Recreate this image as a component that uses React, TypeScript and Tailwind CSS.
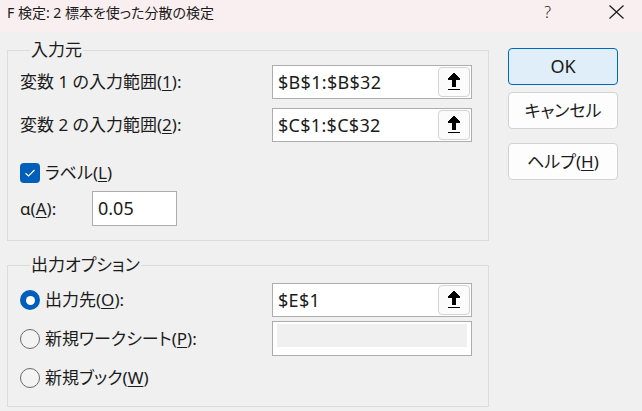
import React from "react";

const FONT = "font-['Noto_Sans','Noto_Sans_CJK_JP',sans-serif]";

function UpBtn() {
  return (
    <div className="absolute right-[1px] top-[1px] bottom-[1px] w-[32px] rounded-[4px] border border-[#d4d4d4] bg-[#fbfbfb] flex items-center justify-center">
      <svg width="12" height="18" viewBox="0 0 12 18" shapeRendering="crispEdges">
        <polygon points="5,0 7,0 7,1 8,1 8,2 9,2 9,3 10,3 10,4 11,4 11,5 12,5 12,7 8,7 8,14 4,14 4,7 0,7 0,5 1,5 1,4 2,4 2,3 3,3 3,2 4,2 4,1 5,1" fill="#000" />
        <rect x="0" y="16" width="12" height="1.3" fill="#000" />
      </svg>
    </div>
  );
}

function RefInput({ value, withBtn = true }: { value: string; withBtn?: boolean }) {
  return (
    <div className="relative w-[200px] h-[34px] border border-[#adadad] bg-white flex items-center pl-[5px]">
      <span className="text-[18px] text-[#1b1b1b] tracking-[0.3px]">{value}</span>
      {withBtn && <UpBtn />}
    </div>
  );
}

function Radio({ checked }: { checked?: boolean }) {
  if (checked)
    return (
      <div className="w-[20px] h-[20px] rounded-full bg-[#005fb8] flex items-center justify-center">
        <div className="w-[9px] h-[9px] rounded-full bg-white" />
      </div>
    );
  return <div className="w-[20px] h-[20px] rounded-full border border-[#6b6b6b] bg-[#f3f3f3]" />;
}

function Btn({ children, primary }: { children: React.ReactNode; primary?: boolean }) {
  return (
    <div
      className={
        "w-[110px] h-[37px] rounded-[4px] flex items-center justify-center text-[#1b1b1b] " +
        (primary ? "border border-[#0067c0] bg-[#e0eef9] text-[18px]" : "border border-[#d2d2d2] bg-[#fdfdfd] text-[17px]")
      }
    >
      {children}
    </div>
  );
}

export default function App() {
  return (
    <div className={"w-[642px] h-[411px] bg-[#f0f0f0] flex flex-col overflow-hidden [font-feature-settings:'palt'] " + FONT}>
      {/* title bar */}
      <div className="h-[32px] shrink-0 bg-[#f9eff0] flex items-center pl-[7px] pb-[8px]">
        <span className="text-[14px] text-[#1b1b1b]">F 検定: 2 標本を使った分散の検定</span>
        <span className="ml-auto mr-[58px] text-[16px] text-[#1b1b1b] font-light">?</span>
        <svg width="15" height="14" viewBox="0 0 15 14" className="mr-[18px]">
          <path d="M0.5 0.5 L14.5 13.5 M14.5 0.5 L0.5 13.5" stroke="#1b1b1b" strokeWidth="1.2" />
        </svg>
      </div>

      <div className="flex pl-[7px]">
        {/* left */}
        <div className="w-[482px] flex flex-col pt-[8px]">
          <fieldset className="border border-[#dcdcdc] pl-[12px] pb-[14px] h-[201px]">
            <legend className="ml-[10px] px-[1px] text-[17px] leading-[20px] text-[#1b1b1b]">入力元</legend>
            <div className="flex items-center mt-[5px] h-[34px]">
              <div className="w-[252px] text-[17px] text-[#1b1b1b]">
                変数 1 の入力範囲(<span className="underline underline-offset-2">1</span>):
              </div>
              <RefInput value="$B$1:$B$32" />
            </div>
            <div className="flex items-center mt-[9px] h-[34px]">
              <div className="w-[252px] text-[17px] text-[#1b1b1b]">
                変数 2 の入力範囲(<span className="underline underline-offset-2">2</span>):
              </div>
              <RefInput value="$C$1:$C$32" />
            </div>
            <div className="flex items-center mt-[21px] h-[20px]">
              <div className="w-[20px] h-[20px] rounded-[4px] bg-[#005fb8] flex items-center justify-center">
                <svg width="12" height="10" viewBox="0 0 12 10">
                  <path d="M1.5 5.2 L4.5 8 L10.5 2" stroke="#fff" strokeWidth="1.2" fill="none" />
                </svg>
              </div>
              <span className="ml-[5px] text-[17px] text-[#1b1b1b]">
                ラベル(<span className="underline underline-offset-2">L</span>)
              </span>
            </div>
            <div className="flex items-center mt-[8px] h-[35px]">
              <div className="w-[72px] text-[17px] text-[#1b1b1b]">
                α(<span className="underline underline-offset-2">A</span>):
              </div>
              <div className="w-[85px] h-[35px] border border-[#adadad] bg-white flex items-center pl-[5px] text-[18px] text-[#1b1b1b]">
                0.05
              </div>
            </div>
          </fieldset>

          <fieldset className="mt-[14px] border border-[#dcdcdc] pl-[12px] h-[152px]">
            <legend className="ml-[10px] px-[1px] text-[17px] leading-[20px] text-[#1b1b1b]">出力オプション</legend>
            <div className="flex items-center mt-[8px] h-[34px]">
              <div className="w-[252px] flex items-center">
                <Radio checked />
                <span className="ml-[5px] text-[17px] text-[#1b1b1b]">
                  出力先(<span className="underline underline-offset-2">O</span>):
                </span>
              </div>
              <RefInput value="$E$1" />
            </div>
            <div className="flex items-center mt-[4px] h-[35px]">
              <div className="w-[252px] flex items-center">
                <Radio />
                <span className="ml-[5px] text-[17px] text-[#1b1b1b]">
                  新規ワークシート(<span className="underline underline-offset-2">P</span>):
                </span>
              </div>
              <div className="w-[200px] h-[35px] border border-[#adadad] bg-white pt-[2px] px-[4px]">
                <div className="h-[23px] bg-[#f0f0f0]" />
              </div>
            </div>
            <div className="flex items-center mt-[12px] h-[20px]">
              <Radio />
              <span className="ml-[5px] text-[17px] text-[#1b1b1b]">
                新規ブック(<span className="underline underline-offset-2">W</span>)
              </span>
            </div>
          </fieldset>
        </div>

        {/* right */}
        <div className="ml-[19px] pt-[16px] flex flex-col">
          <Btn primary>OK</Btn>
          <div className="mt-[7px]">
            <Btn>キャンセル</Btn>
          </div>
          <div className="mt-[14px]">
            <Btn>
              ヘルプ(<span className="underline underline-offset-2">H</span>)
            </Btn>
          </div>
        </div>
      </div>
    </div>
  );
}
